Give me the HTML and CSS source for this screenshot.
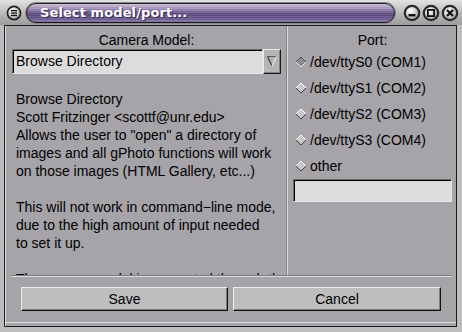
FILE: index.html
```html
<!DOCTYPE html>
<html>
<head>
<meta charset="utf-8">
<link rel="stylesheet" href="styles.css">
</head>
<body>
<div class="win">
  <div class="titlebar">
    <span class="tb-menu">
      <svg width="16" height="16" viewBox="0 0 16 16">
        <defs>
          <radialGradient id="g1" cx="0.4" cy="0.35" r="0.7">
            <stop offset="0" stop-color="#ffffff"/>
            <stop offset="1" stop-color="#9a9a9a"/>
          </radialGradient>
        </defs>
        <circle cx="8" cy="8" r="6.6" fill="url(#g1)" stroke="#1e1e1e" stroke-width="1.6"/>
        <rect x="5" y="5" width="6" height="1.3" fill="#111"/>
        <rect x="5" y="7.4" width="6" height="1.3" fill="#111"/>
        <rect x="5" y="9.8" width="6" height="1.3" fill="#111"/>
      </svg>
    </span>
    <div class="pill"><span class="title">Select model/port...</span></div>
    <div class="tb-btns">
      <svg class="tb-btn" width="18" height="18" viewBox="0 0 18 18">
        <defs>
          <radialGradient id="g2" cx="0.4" cy="0.35" r="0.7">
            <stop offset="0" stop-color="#ffffff"/>
            <stop offset="1" stop-color="#a0a0a0"/>
          </radialGradient>
        </defs>
        <circle cx="9" cy="9" r="7.2" fill="url(#g2)" stroke="#2a2a2a" stroke-width="2.2"/>
        <rect x="5.5" y="10" width="7" height="2.4" fill="#111"/>
      </svg>
      <svg class="tb-btn" width="18" height="18" viewBox="0 0 18 18">
        <circle cx="9" cy="9" r="7.2" fill="url(#g2)" stroke="#2a2a2a" stroke-width="2.2"/>
        <rect x="5.9" y="5.9" width="6.2" height="6.2" fill="none" stroke="#111" stroke-width="1.8"/>
      </svg>
      <svg class="tb-btn" width="18" height="18" viewBox="0 0 18 18">
        <circle cx="9" cy="9" r="7.2" fill="url(#g2)" stroke="#2a2a2a" stroke-width="2.2"/>
        <path d="M6 6 L12 12 M12 6 L6 12" stroke="#111" stroke-width="2.2"/>
      </svg>
    </div>
  </div>
  <div class="frame">
    <div class="panes">
      <div class="left">
        <div class="label">Camera Model:</div>
        <div class="combo">
          <div class="combo-entry">Browse Directory</div>
          <div class="combo-btn">
            <svg width="12" height="12" viewBox="0 0 12 12">
              <path d="M1.5 1.5 L10.5 1.5" stroke="#5a5a5a" stroke-width="1"/>
              <path d="M1.5 1.5 L6 11" stroke="#3a3a3a" stroke-width="1.2"/>
              <path d="M10.5 1.5 L6 11" stroke="#e6e6e6" stroke-width="1.2"/>
            </svg>
          </div>
        </div>
        <div class="desc">
          <div>Browse Directory</div>
          <div>Scott Fritzinger &lt;scottf@unr.edu&gt;</div>
          <div>Allows the user to "open" a directory of</div>
          <div>images and all gPhoto functions will work</div>
          <div>on those images (HTML Gallery, etc...)</div>
          <div>&nbsp;</div>
          <div>This will not work in command−line mode,</div>
          <div>due to the high amount of input needed</div>
          <div>to set it up.</div>
          <div>&nbsp;</div>
          <div>The camera model is supported through the</div>
        </div>
      </div>
      <div class="vsep"></div>
      <div class="right">
        <div class="label">Port:</div>
        <div class="radio">
          <svg class="dia" width="12" height="12" viewBox="0 0 12 12">
            <polygon points="6,1 11,6 6,11 1,6" fill="#8c8a90"/>
            <path d="M1 6 L6 1 L11 6" fill="none" stroke="#505050" stroke-width="1"/>
            <path d="M1 6 L6 11 L11 6" fill="none" stroke="#e8e8e8" stroke-width="1"/>
          </svg>
          <span>/dev/ttyS0 (COM1)</span>
        </div>
        <div class="radio">
          <svg class="dia" width="12" height="12" viewBox="0 0 12 12">
            <polygon points="6,1 11,6 6,11 1,6" fill="#c8c8c8"/>
            <path d="M1 6 L6 1 L11 6" fill="none" stroke="#ffffff" stroke-width="1"/>
            <path d="M1 6 L6 11 L11 6" fill="none" stroke="#404040" stroke-width="1"/>
          </svg>
          <span>/dev/ttyS1 (COM2)</span>
        </div>
        <div class="radio">
          <svg class="dia" width="12" height="12" viewBox="0 0 12 12">
            <polygon points="6,1 11,6 6,11 1,6" fill="#c8c8c8"/>
            <path d="M1 6 L6 1 L11 6" fill="none" stroke="#ffffff" stroke-width="1"/>
            <path d="M1 6 L6 11 L11 6" fill="none" stroke="#404040" stroke-width="1"/>
          </svg>
          <span>/dev/ttyS2 (COM3)</span>
        </div>
        <div class="radio">
          <svg class="dia" width="12" height="12" viewBox="0 0 12 12">
            <polygon points="6,1 11,6 6,11 1,6" fill="#c8c8c8"/>
            <path d="M1 6 L6 1 L11 6" fill="none" stroke="#ffffff" stroke-width="1"/>
            <path d="M1 6 L6 11 L11 6" fill="none" stroke="#404040" stroke-width="1"/>
          </svg>
          <span>/dev/ttyS3 (COM4)</span>
        </div>
        <div class="radio">
          <svg class="dia" width="12" height="12" viewBox="0 0 12 12">
            <polygon points="6,1 11,6 6,11 1,6" fill="#c8c8c8"/>
            <path d="M1 6 L6 1 L11 6" fill="none" stroke="#ffffff" stroke-width="1"/>
            <path d="M1 6 L6 11 L11 6" fill="none" stroke="#404040" stroke-width="1"/>
          </svg>
          <span>other</span>
        </div>
        <div class="entry"></div>
      </div>
    </div>
    <div class="hsep"></div>
    <div class="buttons">
      <button class="btn">Save</button>
      <button class="btn">Cancel</button>
    </div>
  </div>
</div>
</body>
</html>
```

FILE: styles.css
```css
* { box-sizing: border-box; }
html, body {
  margin: 0;
  padding: 0;
}
body {
  width: 462px;
  height: 332px;
  overflow: hidden;
  background: #bdbdbd;
  font-family: "Liberation Sans", Arial, sans-serif;
  font-size: 14px;
  color: #000;
}
.win {
  display: flex;
  flex-direction: column;
  height: 332px;
}
.titlebar {
  height: 25px;
  flex: none;
  display: flex;
  align-items: center;
  background: linear-gradient(#e2e2e2, #b4b4b4 60%, #9c9c9c);
  padding-left: 6px;
}
.tb-menu {
  width: 16px;
  height: 16px;
  display: flex;
}
.pill {
  margin-left: 4px;
  width: 369px;
  height: 20px;
  border: 1px solid #1a1a1a;
  border-radius: 10px;
  background:
    repeating-linear-gradient(rgba(255,255,255,0.07) 0 1px, rgba(0,0,0,0.07) 1px 2px),
    linear-gradient(#d2c6de, #9c88b8 30%, #5e4c80 55%, #6c5a90 80%, #8e7cae);
  display: flex;
  align-items: center;
  padding-left: 13px;
  box-shadow: 0 0 0 1px #8a8a8a;
}
.title {
  font-family: "DejaVu Sans", sans-serif;
  font-weight: bold;
  font-size: 13px;
  color: #ffffff;
  letter-spacing: 0.1px;
  text-shadow: 1px 1px 0 #3a2e50;
}
.tb-btns {
  display: flex;
  margin-left: 8px;
  gap: 1px;
}
.tb-btn { display: block; }
.frame {
  flex: 1;
  margin: 0 5px 5px 4px;
  border: 1px solid #1c1c1c;
  background: #a6a4a9;
  display: flex;
  flex-direction: column;
  box-shadow: inset 1px 0 0 #dcdcdc, inset 0 -3px 0 #a6a4a9, inset 0 -4px 0 #dcdcdc;
}
.panes {
  height: 249px;
  flex: none;
  display: flex;
  overflow: hidden;
}
.left {
  width: 281px;
  flex: none;
  padding: 6px 5px 0 7px;
  overflow: hidden;
}
.label {
  height: 17px;
  line-height: 17px;
  text-align: center;
}
.combo {
  display: flex;
  height: 25px;
}
.combo-entry {
  flex: 1;
  background: #dcdcdc;
  border: 1px solid;
  border-color: #6a6a6a #e8e8e8 #e8e8e8 #6a6a6a;
  box-shadow: inset 1px 1px 0 #000;
  padding-left: 3px;
  line-height: 23px;
}
.combo-btn {
  width: 18px;
  background: #b4b4b4;
  border: 1px solid;
  border-color: #e8e8e8 #1a1a1a #1a1a1a #e8e8e8;
  box-shadow: inset -1px -1px 0 #808080;
  display: flex;
  align-items: center;
  justify-content: center;
  padding-bottom: 1px;
}
.desc {
  margin-top: 16px;
  padding-left: 4px;
  line-height: 18px;
  white-space: nowrap;
}
.vsep {
  width: 2px;
  flex: none;
  border-left: 1px solid #808080;
  border-right: 1px solid #dcdcdc;
}
.right {
  flex: 1;
  padding: 6px 4px 0 5px;
}
.radio {
  height: 26px;
  display: flex;
  align-items: center;
  padding-left: 2px;
}
.dia {
  margin-right: 3px;
  flex: none;
}
.entry {
  height: 23px;
  background: #dcdcdc;
  border: 1px solid;
  border-color: #6a6a6a #e8e8e8 #e8e8e8 #6a6a6a;
  box-shadow: inset 1px 1px 0 #000;
}
.hsep {
  height: 2px;
  margin: 0 4px 0 6px;
  border-top: 1px solid #7c7c7c;
  border-bottom: 1px solid #dcdcdc;
}
.buttons {
  display: grid;
  grid-template-columns: 207px 208px;
  gap: 5px;
  padding: 10px 0 0 16px;
}
.btn {
  height: 24px;
  font-family: "Liberation Sans", Arial, sans-serif;
  font-size: 14px;
  color: #000;
  background: #bebebe;
  border: 1px solid;
  border-color: #ececec #111 #111 #ececec;
  box-shadow: inset -1px -1px 0 #7c7c7c;
  padding: 0;
  margin: 0;
}
```
